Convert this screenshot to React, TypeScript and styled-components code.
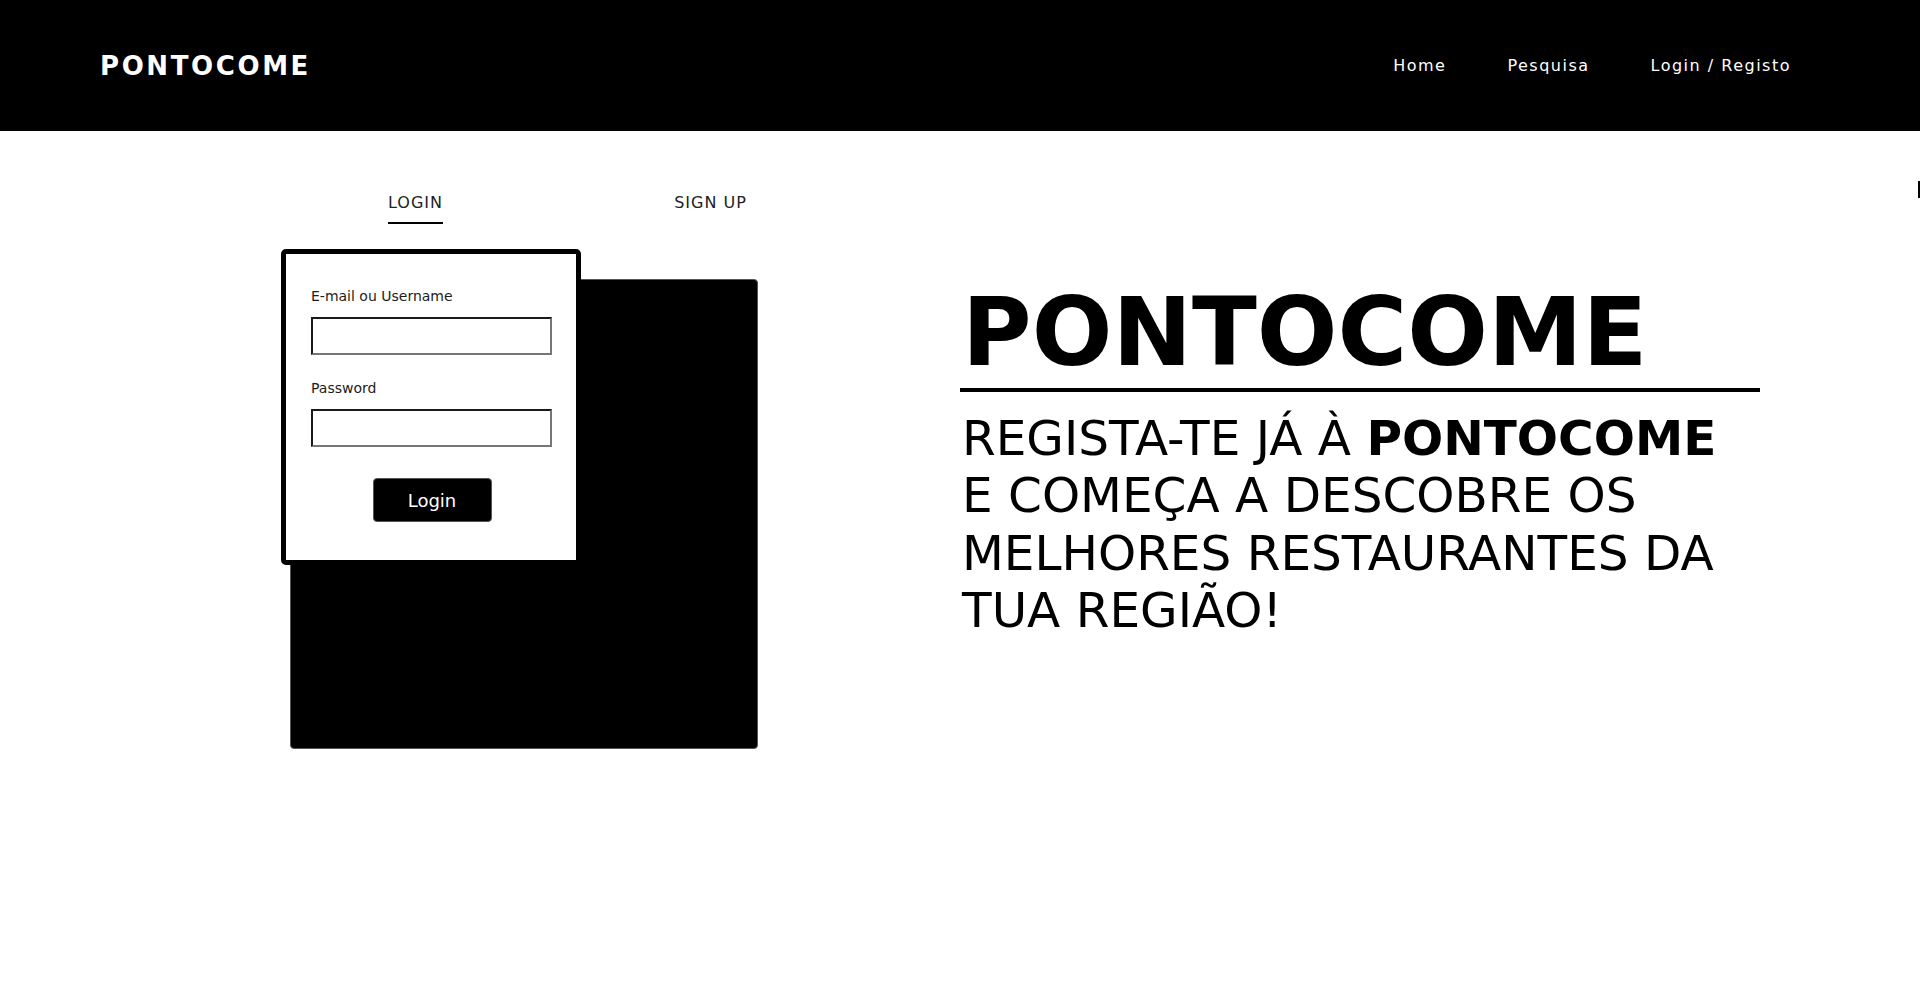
import { createGlobalStyle, styled } from "styled-components";

const GlobalStyle = createGlobalStyle`
  html, body {
    margin: 0;
    padding: 0;
    background: #fff;
    font-family: "DejaVu Sans", "Liberation Sans", sans-serif;
    color: #000;
  }
  * {
    box-sizing: border-box;
  }
`;

const Page = styled.div`
  position: relative;
  width: 100%;
  height: 1007px;
  overflow: hidden;
`;

const Header = styled.header`
  height: 131px;
  background: #000;
  display: flex;
  align-items: center;
  justify-content: space-between;
  padding: 0 129px 0 100px;
`;

const Logo = styled.div`
  color: #fff;
  font-size: 26px;
  font-weight: bold;
  letter-spacing: 2.6px;
`;

const Nav = styled.nav`
  display: flex;
  gap: 61px;
`;

const NavLink = styled.a`
  color: #fff;
  font-size: 16px;
  letter-spacing: 1.5px;
  text-decoration: none;
`;

const Main = styled.main`
  display: grid;
  grid-template-columns: 960px 1fr;
`;

const LeftColumn = styled.section`
  padding: 62px 0 0 268px;
`;

const Tabs = styled.div`
  display: grid;
  grid-template-columns: 295px 295px;
`;

const TabItem = styled.div`
  display: flex;
  justify-content: center;
`;

const TabLabel = styled.span<{ active?: boolean }>`
  font-size: 16px;
  letter-spacing: 1px;
  color: #222;
  padding-bottom: 10px;
  border-bottom: 2px solid ${(props) => (props.active ? "#000" : "transparent")};
`;

const CardStack = styled.div`
  position: relative;
  width: 477px;
  height: 500px;
  margin: 25px 0 0 13px;
`;

// black panel that sits behind the form card
const BackPanel = styled.div`
  position: absolute;
  left: 9px;
  top: 30px;
  width: 468px;
  height: 470px;
  background: #000;
  border: 1px solid #555;
  border-radius: 4px;
`;

const Card = styled.form`
  position: relative;
  z-index: 1;
  width: 300px;
  background: #fff;
  border: 5px solid #000;
  border-radius: 5px;
  padding: 34px 24px 38px 25px;
  display: flex;
  flex-direction: column;
`;

const Label = styled.label`
  font-size: 14px;
  color: #1c1c1c;
  margin-bottom: 13px;
`;

const Input = styled.input`
  width: 241px;
  height: 38px;
  border-style: solid;
  border-width: 2px;
  border-color: #1a1a1a #767676 #767676 #1a1a1a;
  border-radius: 0;
  background: #fff;
  margin-bottom: 25px;
  &:last-of-type {
    margin-bottom: 31px;
  }
`;

const SubmitButton = styled.button`
  align-self: center;
  width: 119px;
  height: 44px;
  background: #000;
  color: #fff;
  border: 1px solid #555;
  border-radius: 4px;
  font-family: "DejaVu Sans", "Liberation Sans", sans-serif;
  font-size: 18px;
  margin-left: 1px;
`;

const RightColumn = styled.section`
  padding-top: 154px;
`;

const Title = styled.h1`
  width: 800px;
  margin: 0;
  font-size: 95px;
  line-height: 1;
  font-weight: bold;
  padding: 0 0 8px 2px;
  border-bottom: 4px solid #000;
`;

const Tagline = styled.p`
  margin: 18px 0 0 2px;
  font-size: 48.5px;
  line-height: 57.4px;
  font-weight: normal;
`;

const EdgeMark = styled.div`
  position: absolute;
  right: 0;
  top: 181px;
  width: 2px;
  height: 17px;
  background: #000;
`;

function App() {
  return (
    <>
      <GlobalStyle />
      <Page>
        <Header>
          <Logo>PONTOCOME</Logo>
          <Nav>
            <NavLink>Home</NavLink>
            <NavLink>Pesquisa</NavLink>
            <NavLink>Login / Registo</NavLink>
          </Nav>
        </Header>
        <Main>
          <LeftColumn>
            <Tabs>
              <TabItem>
                <TabLabel active>LOGIN</TabLabel>
              </TabItem>
              <TabItem>
                <TabLabel>SIGN UP</TabLabel>
              </TabItem>
            </Tabs>
            <CardStack>
              <BackPanel />
              <Card onSubmit={(e) => e.preventDefault()}>
                <Label>E-mail ou Username</Label>
                <Input type="text" />
                <Label>Password</Label>
                <Input type="password" />
                <SubmitButton type="submit">Login</SubmitButton>
              </Card>
            </CardStack>
          </LeftColumn>
          <RightColumn>
            <Title>PONTOCOME</Title>
            <Tagline>
              REGISTA-TE JÁ À <b>PONTOCOME</b>
              <br />E COMEÇA A DESCOBRE OS
              <br />
              MELHORES RESTAURANTES DA
              <br />
              TUA REGIÃO!
            </Tagline>
          </RightColumn>
        </Main>
        <EdgeMark />
      </Page>
    </>
  );
}

export default App;
